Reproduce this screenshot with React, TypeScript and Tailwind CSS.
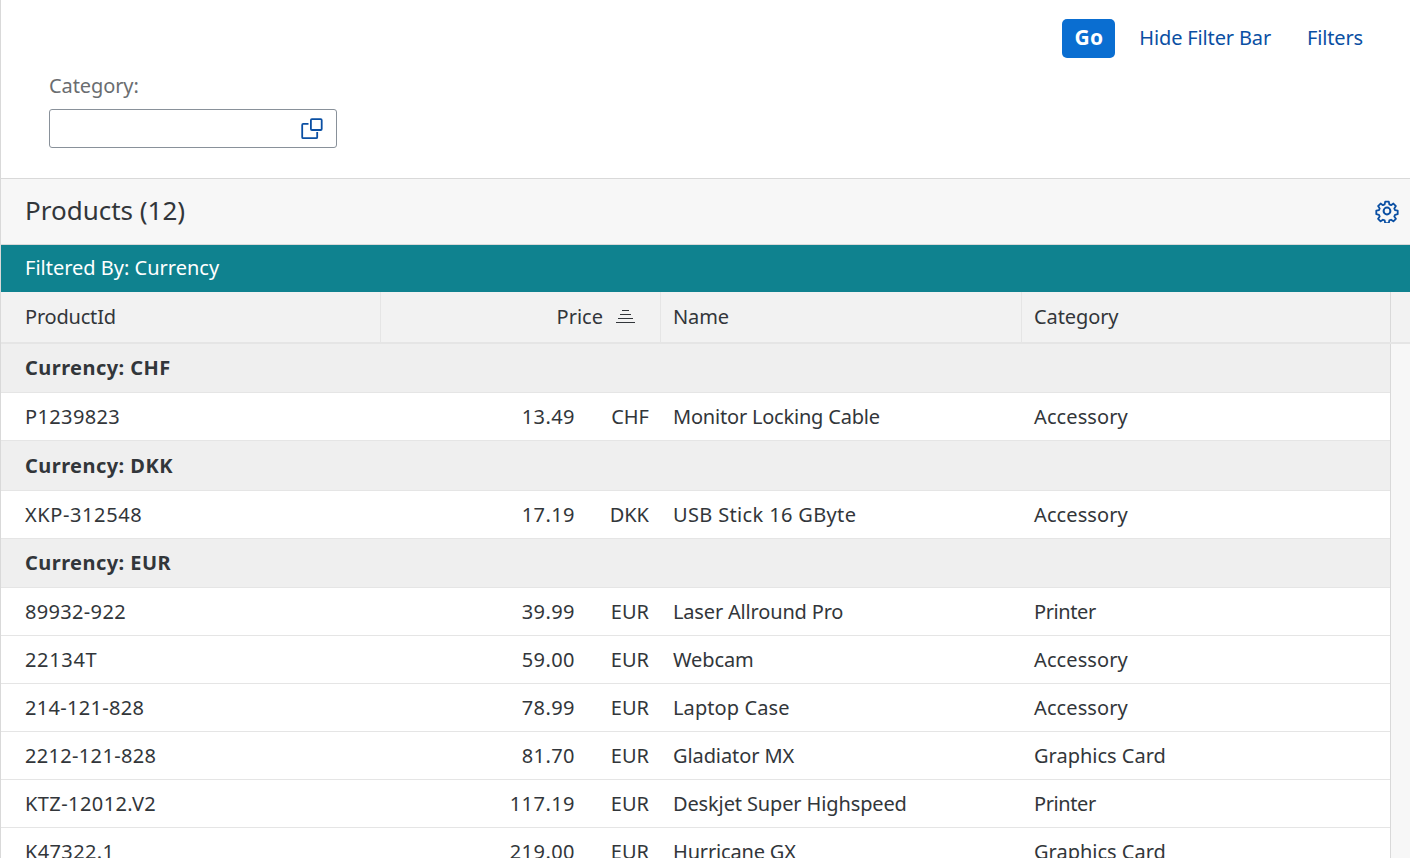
const F = "[font-family:'Noto_Sans',sans-serif]";

type Row =
  | { g: string; h: string }
  | { id: string; idT: string; price: string; cur: string; name: string; nameT: string; cat: string; catT: string };

const rows: Row[] = [
  { g: "Currency: CHF", h: "h-[49px]" },
  { id: "P1239823", idT: "tracking-[0.37px]", price: "13.49", cur: "CHF", name: "Monitor Locking Cable", nameT: "tracking-[-0.2px]", cat: "Accessory", catT: "tracking-[0.1px]" },
  { g: "Currency: DKK", h: "h-[50px]" },
  { id: "XKP-312548", idT: "tracking-[0.6px]", price: "17.19", cur: "DKK", name: "USB Stick 16 GByte", nameT: "tracking-[0.35px]", cat: "Accessory", catT: "tracking-[0.1px]" },
  { g: "Currency: EUR", h: "h-[49px]" },
  { id: "89932-922", idT: "tracking-[0.33px]", price: "39.99", cur: "EUR", name: "Laser Allround Pro", nameT: "tracking-[-0.17px]", cat: "Printer", catT: "tracking-[-0.4px]" },
  { id: "22134T", idT: "tracking-[0.66px]", price: "59.00", cur: "EUR", name: "Webcam", nameT: "tracking-[-0.1px]", cat: "Accessory", catT: "tracking-[0.1px]" },
  { id: "214-121-828", idT: "tracking-[0.3px]", price: "78.99", cur: "EUR", name: "Laptop Case", nameT: "tracking-[0.1px]", cat: "Accessory", catT: "tracking-[0.1px]" },
  { id: "2212-121-828", idT: "tracking-[0.33px]", price: "81.70", cur: "EUR", name: "Gladiator MX", nameT: "tracking-[-0.1px]", cat: "Graphics Card", catT: "tracking-[0px]" },
  { id: "KTZ-12012.V2", idT: "tracking-[0.42px]", price: "117.19", cur: "EUR", name: "Deskjet Super Highspeed", nameT: "tracking-[-0.13px]", cat: "Printer", catT: "tracking-[-0.4px]" },
  { id: "K47322.1", idT: "tracking-[0.37px]", price: "219.00", cur: "EUR", name: "Hurricane GX", nameT: "tracking-[-0.17px]", cat: "Graphics Card", catT: "tracking-[0px]" },
];

function ValueHelp() {
  return (
    <svg width="22" height="22" viewBox="0 0 22 22" fill="none" stroke="#0a4fa3" strokeWidth="1.8">
      <path d="M7.500 5.900H2.200a1 1 0 0 0-1 1v12.300a1 1 0 0 0 1 1h13a1 1 0 0 0 1-1v-5.200" />
      <rect x="9.900" y="1.200" width="10.800" height="10.800" rx="1" />
    </svg>
  );
}

function Gear() {
  return (
    <svg width="24" height="24" viewBox="0 0 24 24" fill="none" stroke="#0a4fa3" strokeWidth="2" strokeLinejoin="round">
      <circle cx="12" cy="12" r="3.4" />
      <path d="M10 1.600h4l.6 3.100 1.900.8 2.600-1.800 2.800 2.800-1.800 2.600.8 1.900 3 .6v4l-3 .6-.8 1.900 1.800 2.600-2.800 2.800-2.600-1.800-1.900.8-.6 3h-4l-.6-3-1.900-.8-2.600 1.800-2.800-2.800 1.800-2.600-.8-1.900-3-.6v-4l3-.6.8-1.900-1.800-2.600 2.800-2.800 2.600 1.800 1.900-.8z" transform="translate(1.200 1.200) scale(.9)" />
    </svg>
  );
}

function SortIcon() {
  return (
    <svg width="19" height="16" viewBox="0 0 19 16" stroke="#32363a" strokeWidth="1.2">
      <path d="M6 1.500h7M4 5.500h11M2 9.500h15M0 13.500h19" />
    </svg>
  );
}

export default function App() {
  return (
    <div className={`${F} h-[858px] w-[1410px] overflow-hidden bg-white text-[20px] text-[#32363a] border-l border-[#d9d9d9]`}>
      <div className="h-[178px] flex flex-col">
        <div className="flex items-center justify-end h-[76px] pr-[47px] pt-[1px]">
          <button className="h-[39px] w-[53px] rounded-[5px] bg-[#0a6ed1] text-white font-bold text-[21px] tracking-[0.3px] pb-[2px] flex items-center justify-center">Go</button>
          <span className="ml-[24px] text-[#0a4fa3] pb-[2px] tracking-[-0.15px]">Hide Filter Bar</span>
          <span className="ml-[36px] text-[#0a4fa3] pb-[2px] tracking-[-0.15px]">Filters</span>
        </div>
        <div className="pl-[48px]">
          <div className="text-[#6a6d70] h-[20px] leading-[20px] tracking-[-0.1px]">Category:</div>
          <div className="mt-[13px] h-[39px] w-[288px] rounded-[3px] border border-[#89919a] flex items-center justify-end pr-[13px]">
            <ValueHelp />
          </div>
        </div>
      </div>
      <div className="h-[67px] border-y border-[#d9d9d9] bg-[#f7f7f7] flex items-center justify-between pl-[24px] pr-[11px]">
        <span className="text-[26px] pb-[2px]">Products (12)</span>
        <span className="pb-[2px]"><Gear /></span>
      </div>
      <div className="h-[47px] bg-[#0f828f] text-white flex items-center pl-[24px] pb-[2px]">Filtered By: Currency</div>
      <div className="flex h-[52px] bg-[#f2f2f2] border-b-2 border-[#e5e5e5]">
        <div className="w-[380px] border-r border-[#e5e5e5] pl-[24px] flex items-center tracking-[-0.2px]">ProductId</div>
        <div className="w-[280px] border-r border-[#e5e5e5] pr-[25px] flex items-center justify-end gap-[13px]">
          <span>Price</span>
          <SortIcon />
        </div>
        <div className="w-[361px] border-r border-[#e5e5e5] pl-[12px] flex items-center tracking-[-0.1px]">Name</div>
        <div className="w-[369px] border-r border-[#d9d9d9] pl-[12px] flex items-center tracking-[-0.1px]">Category</div>
        <div className="flex-1" />
      </div>
      <div className="flex">
        <div className="w-[1390px] border-r border-[#d9d9d9]">
          {rows.map((r, i) =>
            "g" in r ? (
              <div key={i} className={`${r.h} bg-[#efefef] border-b border-[#e5e5e5] pl-[24px] flex items-center font-bold tracking-[0.45px]`}>{r.g}</div>
            ) : (
              <div key={i} className="h-[48px] border-b border-[#e5e5e5] flex items-center">
                <div className={`w-[380px] pl-[24px] ${r.idT}`}>{r.id}</div>
                <div className="w-[280px] flex items-center justify-end pr-[12px]">
                  <span className="tracking-[0.45px]">{r.price}</span>
                  <span className="w-[74px] text-right">{r.cur}</span>
                </div>
                <div className={`w-[361px] pl-[12px] ${r.nameT}`}>{r.name}</div>
                <div className={`pl-[12px] ${r.catT}`}>{r.cat}</div>
              </div>
            )
          )}
        </div>
        <div className="flex-1 bg-[#f7f7f7]" />
      </div>
    </div>
  );
}
